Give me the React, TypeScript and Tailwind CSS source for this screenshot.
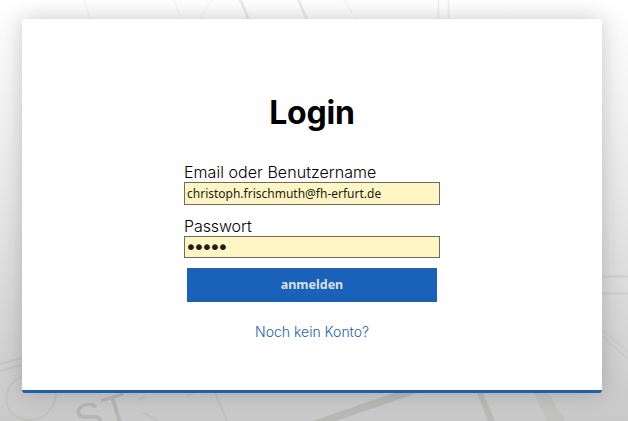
function Backdrop() {
  return (
    <svg className="absolute inset-0 h-full w-full" viewBox="0 0 628 421" fill="none" aria-hidden="true">
      <g stroke="#aaa69c" strokeOpacity="0.22" strokeWidth="1.5">
        <path d="M84 0 90 19M344 0 356 19M212 0 200 19M174 0 181 19" strokeOpacity="0.08" />
        <path d="M438.500 0V19M448.500 0V19" strokeOpacity="0.18" />
        <path d="M602 276.500H628M602 293.500H628" strokeWidth="2" />
        <path d="M602 330 628 352M602 336 628 359" strokeOpacity="0.15" />
        <path d="M0 364 22 358M0 371 22 365" strokeWidth="2" />
        <ellipse cx="31" cy="397" rx="25" ry="22.500" transform="rotate(-20 31 397)" strokeWidth="2" />
        <path d="M215 393 227 421" strokeWidth="2" />
        <path d="M137 400 147 397M142 413Q151 415 157 421M186 393Q188 398 193 393" strokeWidth="2" />
      </g>
      <g fill="#96948d" fillOpacity="0.32">
        <path d="M313 421H336L417 393H394Z" />
        <path d="M477 393 488 421H495L483 393Z" fillOpacity="0.28" />
        <path d="M534 393 547 421H565L549 393Z" fillOpacity="0.13" />
        <path d="M239 0 247 19H250L242 0ZM297 0 305 19H308L300 0Z" fillOpacity="0.18" />
      </g>
      <text x="80" y="435" transform="rotate(-17 80 435)" fill="#96948d" fillOpacity="0.38" className="font-['Liberation_Sans'] text-[41px] tracking-[2px]">
        ST
      </text>
    </svg>
  );
}

export default function App() {
  return (
    <main className="relative h-[421px] w-[628px] overflow-hidden bg-linear-to-b from-white via-[#e6e6e6] via-50% to-[#c8c8c8] px-[22px] pt-[19px] font-[Inter,sans-serif] text-black">
      <Backdrop />
      <section className="relative flex h-[374px] w-[580px] flex-col items-center rounded-[3px] border-b-[3px] border-[#1961b9] bg-white pt-[72px] shadow-[0_0_22px_rgba(0,0,0,0.2)]">
        <h1 className="h-10 text-[32px] leading-[44px] font-bold tracking-[-0.2px]">Login</h1>
        <form className="mt-[31px] flex w-64 flex-col" onSubmit={(event) => event.preventDefault()}>
          <label htmlFor="user" className="h-5 text-[16px] leading-5 font-light tracking-[0.05px]">
            Email oder Benutzername
          </label>
          <input
            id="user"
            defaultValue="christoph.frischmuth@fh-erfurt.de"
            className="h-[23px] border border-[#756b56] bg-[#fff6c4] px-[2px] font-['Noto_Sans',sans-serif] text-[12px] text-[#211b17] outline-none"
          />
          <label htmlFor="password" className="mt-[11px] h-5 text-[16px] leading-5 font-light tracking-[-0.1px]">
            Passwort
          </label>
          <input
            id="password"
            type="password"
            defaultValue="12345"
            className="h-[22px] border border-[#756b56] bg-[#fff6c4] px-0 font-['DejaVu_Sans',sans-serif] text-[20px] tracking-[-3.800px] text-[#211b17] outline-none"
          />
          <button className="mt-[10px] h-[34px] w-[250px] self-center bg-[#1961b9] font-['Noto_Sans',sans-serif] text-[12.500px] font-bold text-[#dce1e8]">
            anmelden
          </button>
        </form>
        <a href="#" className="mt-5 text-[14px] leading-5 font-light text-[#1961b9]">
          Noch kein Konto?
        </a>
      </section>
    </main>
  );
}
